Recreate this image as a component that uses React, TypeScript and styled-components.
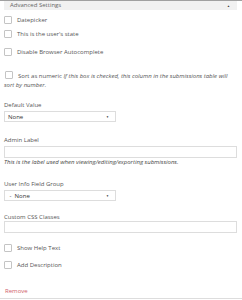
import React from "react"
import styled, { createGlobalStyle } from "styled-components"

const GlobalStyle = createGlobalStyle`
    html, body {
        margin: 0;
        padding: 0;
        background: #ffffff;
    }
    body {
        font-family: "Open Sans", "Liberation Sans", sans-serif;
        font-size: 6px;
        color: #444444;
    }
`

const App = () => {
    return (
        <Page>
            <GlobalStyle />
            <Panel>
                {/* 접힌 헤더 */}
                <Header>
                    <span>Advanced Settings</span>
                    <Arrow>▲</Arrow>
                </Header>

                <CheckRow $top={6}>
                    <Box />
                    <span>Datepicker</span>
                </CheckRow>
                <CheckRow $top={6}>
                    <Box />
                    <span>This is the user's state</span>
                </CheckRow>
                <CheckRow $top={10}>
                    <Box />
                    <span>Disable Browser Autocomplete</span>
                </CheckRow>

                <SortText>
                    <InlineBox />
                    Sort as numeric <em>If this box is checked, this column in the submissions table will sort by number.</em>
                </SortText>

                <Field $top={11}>
                    <Label>Default Value</Label>
                    <Select $width={112}>
                        <span>None</span>
                        <Caret>▼</Caret>
                    </Select>
                </Field>

                <Field $top={14}>
                    <Label>Admin Label</Label>
                    <Input />
                    <Help>This is the label used when viewing/editing/exporting submissions.</Help>
                </Field>

                <Field $top={14}>
                    <Label>User Info Field Group</Label>
                    <Select $width={112}>
                        <span>&nbsp;-&nbsp; None</span>
                        <Caret>▼</Caret>
                    </Select>
                </Field>

                <Field $top={12}>
                    <Label $tight>Custom CSS Classes</Label>
                    <Input />
                </Field>

                <CheckRow $top={11}>
                    <Box />
                    <span>Show Help Text</span>
                </CheckRow>
                <CheckRow $top={9}>
                    <Box />
                    <span>Add Description</span>
                </CheckRow>

                <Remove>Remove</Remove>
            </Panel>
        </Page>
    )
}

const Page = styled.div`
    width: 242px;
    height: 300px;
    overflow: hidden;
    border-top: 1px solid #a0a0a0;
    box-sizing: border-box;
`

const Panel = styled.div`
    padding: 0 5px 0 4px;
    height: 298px;
    border-bottom: 1px solid #dddddd;
    box-sizing: border-box;
`

const Header = styled.div`
    height: 9px;
    background: #f1f1f1;
    display: flex;
    justify-content: space-between;
    align-items: center;
    padding: 0 7px 0 6px;
    line-height: 6px;
    color: #666666;
    span {
        margin-top: -2px;
    }
`

const Arrow = styled.i`
    font-style: normal;
    font-size: 3px;
    color: #333333;
`

const CheckRow = styled.div<{ $top: number }>`
    display: flex;
    align-items: center;
    gap: 5px;
    margin-top: ${p => p.$top}px;
    height: 8px;
    color: #555555;
`

const Box = styled.span`
    width: 6px;
    height: 6px;
    border: 1px solid #c4c4c4;
    border-radius: 1px;
    background: #ffffff;
    flex-shrink: 0;
`

const InlineBox = styled(Box)`
    display: inline-block;
    box-sizing: border-box;
    width: 8px;
    height: 8px;
    vertical-align: middle;
    margin: -2px 5px 0 1px;
`

const SortText = styled.p`
    margin: 16px 0 0;
    line-height: 9px;
    color: #555555;
    em {
        font-style: italic;
        color: #555555;
    }
`

const Field = styled.div<{ $top: number }>`
    margin-top: ${p => p.$top}px;
    display: flex;
    flex-direction: column;
`

const Label = styled.label<{ $tight?: boolean }>`
    line-height: 8px;
    margin-bottom: ${p => (p.$tight ? 0 : 2)}px;
    color: #555555;
`

const Select = styled.div<{ $width: number }>`
    width: ${p => p.$width}px;
    height: 11px;
    border: 1px solid #dddddd;
    box-sizing: border-box;
    display: flex;
    align-items: center;
    justify-content: space-between;
    padding: 0 6px 0 3px;
    color: #333333;
    background: #ffffff;
`

const Caret = styled.i`
    font-style: normal;
    font-size: 3px;
    color: #333333;
`

const Input = styled.div`
    height: 12px;
    border: 1px solid #dddddd;
    box-sizing: border-box;
    background: #ffffff;
`

const Help = styled.em`
    font-style: italic;
    line-height: 8px;
    color: #444444;
`

const Remove = styled.a`
    display: block;
    margin-top: 18px;
    margin-left: 1px;
    color: #d0616b;
    line-height: 8px;
    cursor: pointer;
`

export default App
